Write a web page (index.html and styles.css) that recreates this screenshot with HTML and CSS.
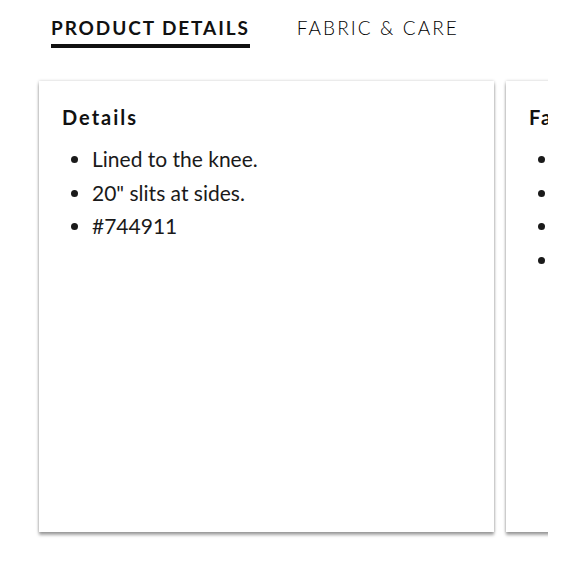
FILE: index.html
```html
<!DOCTYPE html>
<html lang="en">
<head>
<meta charset="utf-8">
<title>Product details</title>
<link rel="stylesheet" href="styles.css">
</head>
<body>
<nav class="tabs">
  <span class="tab tab-active">PRODUCT DETAILS</span>
  <span class="tab">FABRIC &amp; CARE</span>
</nav>
<div class="carousel">
  <section class="card">
    <h2 class="card-title">Details</h2>
    <ul class="card-list">
      <li>Lined to the knee.</li>
      <li>20" slits at sides.</li>
      <li>#744911</li>
    </ul>
  </section>
  <section class="card">
    <h2 class="card-title">Fabric &amp; Care</h2>
    <ul class="card-list">
      <li>Self: 100% polyester.</li>
      <li>Lining: 100% polyester.</li>
      <li>Machine wash cold.</li>
      <li>Imported.</li>
    </ul>
  </section>
</div>
</body>
</html>
```
FILE: styles.css
```css
* { box-sizing: border-box; }
html, body { margin: 0; background: #fff; }
body {
  font-family: Lato, "Noto Sans", sans-serif;
  color: #111;
}
.tabs {
  display: flex;
  gap: 47px;
  padding: 16px 0 0 51px;
}
.tab {
  font-size: 19px;
  font-weight: 300;
  letter-spacing: 2.1px;
  line-height: 24px;
  padding-bottom: 4px;
  border-bottom: 4px solid transparent;
  color: #000;
}
.tab-active {
  font-weight: 700;
  letter-spacing: 1.9px;
  color: #111;
  border-bottom-color: #111;
}
.carousel {
  display: flex;
  gap: 12px;
  width: 548px;
  overflow: hidden;
  margin-top: 29px;
  padding: 4px 0 10px 39px;
}
.card {
  flex: 0 0 455px;
  height: 451px;
  padding: 23px 23px;
  background: #fff;
  box-shadow: 0 3px 3px rgba(0, 0, 0, 0.35), 0 0 3px rgba(0, 0, 0, 0.2);
}
.card-title {
  margin: 0;
  font-size: 20px;
  font-weight: 700;
  letter-spacing: 2px;
  line-height: 26px;
}
.card-list {
  margin: 12px 0 0;
  padding-left: 30px;
  font-size: 21px;
  font-weight: 400;
  letter-spacing: 0;
  line-height: 33.5px;
  color: #1a1a1a;
}
```
